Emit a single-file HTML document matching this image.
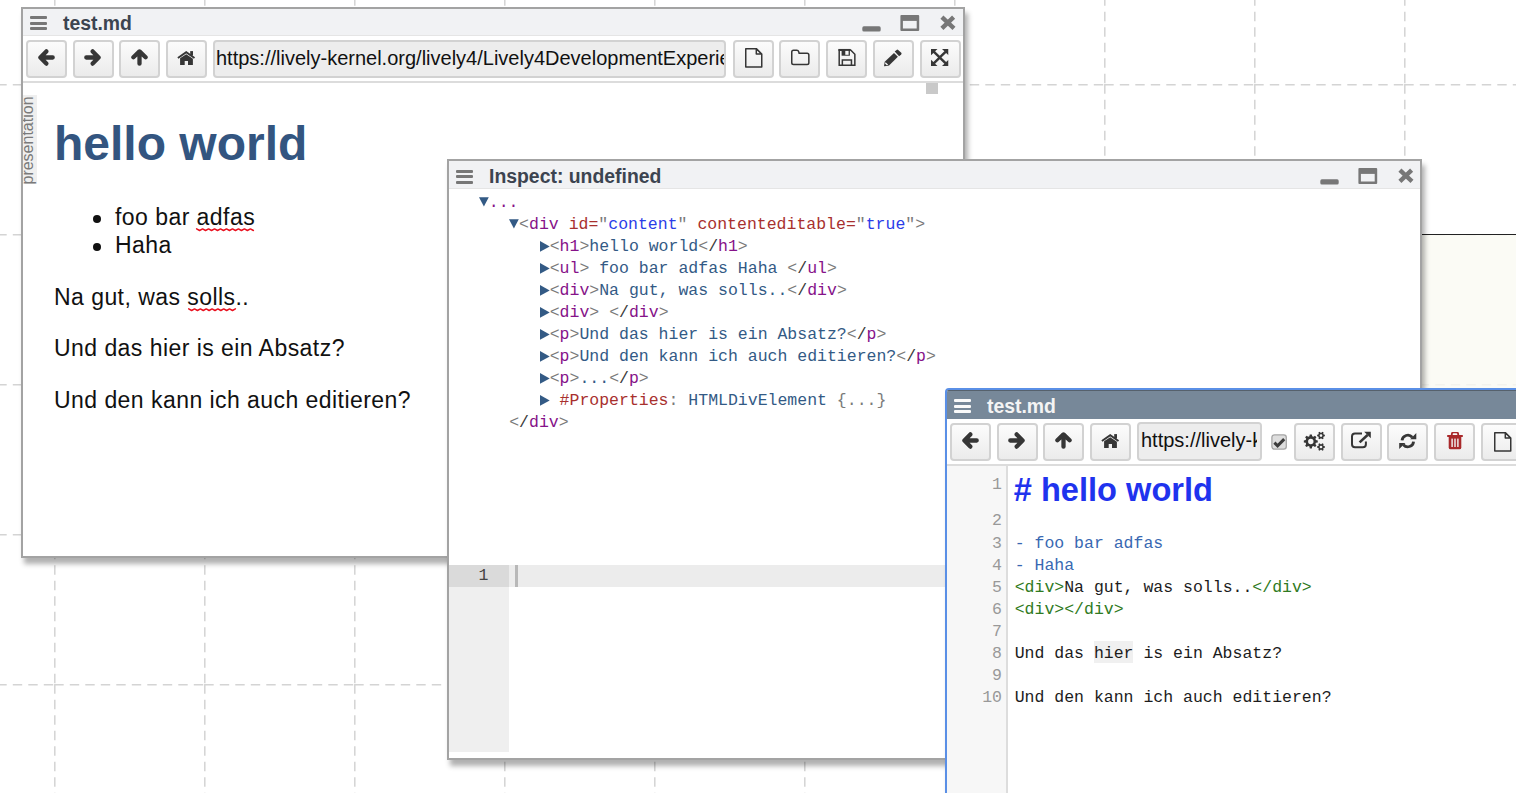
<!DOCTYPE html>
<html><head><meta charset="utf-8">
<style>
html,body{margin:0;padding:0;}
body{width:1516px;height:793px;overflow:hidden;position:relative;background:#fff;font-family:"Liberation Sans",sans-serif;}
.abs{position:absolute;}
.win{position:absolute;box-sizing:border-box;border:2px solid #a3a3a3;background:#fff;box-shadow:3px 6px 5px rgba(0,0,0,0.31);overflow:hidden;}
.tbar{position:absolute;left:0;right:0;top:0;height:26px;background:#f1f2f4;border-bottom:1.7px solid #e5e5e5;}
.ham{position:absolute;width:17px;height:14px;}
.ham i{position:absolute;left:0;width:17px;height:3px;background:#777;border-radius:1px;}
.ttl{position:absolute;font-weight:bold;font-size:19.4px;color:#3c4450;white-space:nowrap;}
.btn{position:absolute;box-sizing:border-box;width:41px;height:38px;border:2px solid #d2d2d2;border-radius:4px;background:linear-gradient(#fcfcfc,#ebebeb);}
.btn svg{position:absolute;}
.url{position:absolute;box-sizing:border-box;height:38px;border:2px solid #d2d2d2;border-radius:4px;background:#ededed;overflow:hidden;font-size:20px;color:#111;white-space:nowrap;}
.url span{position:absolute;top:5px;left:1px;}
.hline{position:absolute;left:0;right:0;height:2px;background:#dcdcdc;}
.mono{font-family:"Liberation Mono",monospace;font-size:16.5px;white-space:pre;}
.tri{position:absolute;}
.g{color:#7a7a7a}.sl{color:#3a3a3a}.tg{color:#861289}.an{color:#a8302e}.av{color:#2b3de8}.tx{color:#335a85}
.cg{color:#2f7a22}.cl{color:#3868b2}.ck{color:#1c1c1c}
.row{position:absolute;font-family:"Liberation Mono",monospace;font-size:16.5px;line-height:22px;white-space:pre;}
.ln{position:absolute;font-family:"Liberation Mono",monospace;font-size:16.5px;line-height:22px;white-space:pre;color:#999;text-align:right;width:40px;}
.w3 .tbar{background:#778899;border-bottom:none;box-shadow:inset 0 1px 0 #56616c;}
.w3 .ham i{background:#fafafa;}
.p23{font-size:23px;line-height:23px;color:#111;white-space:nowrap;letter-spacing:0.45px;}
</style></head>
<body>
<svg width="0" height="0" style="position:absolute">
<defs>
<symbol id="i-left" viewBox="0 0 17 17"><path d="M8.3 2.4L2.4 8.5L8.3 14.6M2.6 8.5H14.7" stroke="#363636" stroke-width="4.3" stroke-linecap="round" stroke-linejoin="round" fill="none"/></symbol>
<symbol id="i-right" viewBox="0 0 17 17"><path d="M8.7 2.4L14.6 8.5L8.7 14.6M14.4 8.5H2.3" stroke="#363636" stroke-width="4.3" stroke-linecap="round" stroke-linejoin="round" fill="none"/></symbol>
<symbol id="i-up" viewBox="0 0 17 17"><path d="M2.4 8.3L8.5 2.4L14.6 8.3M8.5 2.6V14.7" stroke="#363636" stroke-width="4.3" stroke-linecap="round" stroke-linejoin="round" fill="none"/></symbol>
<symbol id="i-home" viewBox="0 0 19 15"><path d="M0.9 8.1L9.2 2.2L17.5 8.1" stroke="#363636" stroke-width="1.9" fill="none"/><rect x="13.2" y="1.1" width="2.8" height="4.5" fill="#363636"/><path d="M3.1 8.3L9.2 4.3L15.9 8.7V14.9H11V11H7.7V14.9H3.1Z" fill="#363636"/></symbol>
<symbol id="i-file" viewBox="0 0 19 21"><path d="M1.75 1.65H12.3L17.75 7.1V19.95H1.75Z M12.3 1.65V7.1H17.75" stroke="#363636" stroke-width="1.5" fill="none" stroke-linejoin="round"/></symbol>
<symbol id="i-folder" viewBox="0 0 20 17"><path d="M1.75 2.9Q1.75 1.15 3.5 1.15H6.8Q8.3 1.15 8.7 2.6L9.1 4.35H17.1Q18.85 4.35 18.85 6.1V13.85Q18.85 15.6 17.1 15.6H3.5Q1.75 15.6 1.75 13.85Z" stroke="#363636" stroke-width="1.5" fill="none" stroke-linejoin="round"/></symbol>
<symbol id="i-save" viewBox="0 0 18 18"><path d="M1.2 1.95H12.6L16.85 6.2V17.15H1.2Z" stroke="#363636" stroke-width="1.5" fill="none"/><rect x="0.45" y="0.95" width="12" height="2" fill="#363636"/><rect x="3.6" y="1.5" width="8.3" height="6.2" fill="#363636"/><rect x="7.3" y="2.9" width="3.3" height="3.9" fill="#f8f8f8"/><path d="M4.35 17V11.95H13.45V17" stroke="#363636" stroke-width="1.5" fill="none"/></symbol>
<symbol id="i-pencil" viewBox="0 0 19 18"><path d="M11 4L14.9 7.7L5.8 16.8L1.7 12.8Z" fill="#363636"/><path d="M1.7 12.8L1 17.3L5.8 16.8Z" fill="#363636"/><path d="M11.7 2.6L13.6 0.9Q14.4 0.2 15.2 0.9L18.3 3.8Q19 4.6 18.2 5.4L16.1 7.2Z" fill="#363636"/><path d="M1.9 14.4L2.8 13.4L5 15.5L4 16.5Z" fill="#f6f6f6"/></symbol>
<symbol id="i-expand" viewBox="0 0 17.5 17.5" preserveAspectRatio="none"><path d="M0 0L6.5 0L4.1 2.4L8.75 7.05L13.4 2.4L11 0L17.5 0L17.5 6.5L15.1 4.1L10.45 8.75L15.1 13.4L17.5 11L17.5 17.5L11 17.5L13.4 15.1L8.75 10.45L4.1 15.1L6.5 17.5L0 17.5L0 11L2.4 13.4L7.05 8.75L2.4 4.1L0 6.5Z" fill="#363636"/></symbol>
<symbol id="i-min" viewBox="0 0 19 6"><rect x="0.3" y="0.3" width="18.4" height="5.2" rx="1.6" fill="#777"/></symbol>
<symbol id="i-max" viewBox="0 0 20 17"><path d="M0.4 2.1Q0.4 1.1 1.4 1.1H18.2Q19.2 1.1 19.2 2.1V16Q19.2 17 18.2 17H1.4Q0.4 17 0.4 16Z" fill="#777"/><rect x="2.9" y="6.9" width="13.8" height="7.6" fill="#f1f2f4"/></symbol>
<symbol id="i-close" viewBox="0 0 16 16"><path d="M1.9 2.1L14 13.3M13.6 2.1L1.9 13.3" stroke="#777" stroke-width="4.4"/></symbol>
<symbol id="i-down" viewBox="0 0 10 10"><path d="M0 0.2H9.8L4.9 9.6Z" fill="#335a85"/></symbol>
<symbol id="i-rt" viewBox="0 0 10 11"><path d="M0 0.1L9.7 5.45L0 10.8Z" fill="#335a85"/></symbol>
<symbol id="i-gears" viewBox="0 0 36 34"><path d="M19.91 15.05 L21.77 15.40 L21.77 17.50 L19.91 17.85 L19.40 19.07 L20.47 20.64 L18.99 22.12 L17.42 21.05 L16.20 21.56 L15.85 23.42 L13.75 23.42 L13.40 21.56 L12.18 21.05 L10.61 22.12 L9.13 20.64 L10.20 19.07 L9.69 17.85 L7.83 17.50 L7.83 15.40 L9.69 15.05 L10.20 13.83 L9.13 12.26 L10.61 10.78 L12.18 11.85 L13.40 11.34 L13.75 9.48 L15.85 9.48 L16.20 11.34 L17.42 11.85 L18.99 10.78 L20.47 12.26 L19.40 13.83ZM12.10 16.45 a2.70 2.70 0 1 0 5.40 0 a2.70 2.70 0 1 0 -5.40 0ZM27.72 9.55 L28.87 9.75 L28.87 11.35 L27.72 11.55 L27.23 12.41 L27.63 13.50 L26.24 14.30 L25.50 13.41 L24.50 13.41 L23.76 14.30 L22.37 13.50 L22.77 12.41 L22.28 11.55 L21.13 11.35 L21.13 9.75 L22.28 9.55 L22.77 8.69 L22.37 7.60 L23.76 6.80 L24.50 7.69 L25.50 7.69 L26.24 6.80 L27.63 7.60 L27.23 8.69ZM23.65 10.55 a1.35 1.35 0 1 0 2.70 0 a1.35 1.35 0 1 0 -2.70 0ZM27.72 21.00 L28.87 21.20 L28.87 22.80 L27.72 23.00 L27.23 23.86 L27.63 24.95 L26.24 25.75 L25.50 24.86 L24.50 24.86 L23.76 25.75 L22.37 24.95 L22.77 23.86 L22.28 23.00 L21.13 22.80 L21.13 21.20 L22.28 21.00 L22.77 20.14 L22.37 19.05 L23.76 18.25 L24.50 19.14 L25.50 19.14 L26.24 18.25 L27.63 19.05 L27.23 20.14ZM23.65 22.00 a1.35 1.35 0 1 0 2.70 0 a1.35 1.35 0 1 0 -2.70 0Z" fill="#363636" fill-rule="evenodd"/></symbol>
<symbol id="i-ext" viewBox="0 0 36 34"><path d="M19 8.4H12Q9 8.4 9 11.4V19.3Q9 22.3 12 22.3H19.9Q22.9 22.3 22.9 19.3V16.5" stroke="#363636" stroke-width="2" fill="none"/><path d="M16.6 17.4L24.6 10" stroke="#363636" stroke-width="2.6"/><path d="M21.2 6.7H27.8V13.2Z" fill="#363636"/></symbol>
<symbol id="i-refresh" viewBox="0 0 36 34"><path d="M13.02 15.49A5.80 5.80 0 0 1 23.24 12.27M24.58 16.51A5.80 5.80 0 0 1 14.36 19.73" stroke="#363636" stroke-width="2.8" fill="none"/><path d="M21.2 14.2H27.3V8.1Z M10.2 17.9H16.4L10.2 24Z" fill="#363636"/></symbol>
<symbol id="i-trash" viewBox="0 0 16 18"><path d="M0.2 3.1H15.8V5H0.2Z" fill="#a9292b"/><path d="M4.8 3.2V2.2Q4.8 0.4 6.6 0.4H9.4Q11.2 0.4 11.2 2.2V3.2" stroke="#a9292b" stroke-width="1.8" fill="none"/><path d="M1.7 4.5H14.3V15.4Q14.3 17.3 12.4 17.3H3.6Q1.7 17.3 1.7 15.4Z" fill="#a9292b"/><rect x="4.4" y="6.6" width="1.4" height="8.4" fill="#f3f3f3"/><rect x="7.3" y="6.6" width="1.4" height="8.4" fill="#f3f3f3"/><rect x="10.2" y="6.6" width="1.4" height="8.4" fill="#f3f3f3"/></symbol>
<symbol id="i-check" viewBox="0 0 16 16"><rect x="0.9" y="0.8" width="14.4" height="14.4" rx="2.6" fill="#dedede" stroke="#a6a6a6" stroke-width="1.3"/><path d="M3.4 8.6L6.6 11.8L13.2 5.1" stroke="#3c3c3c" stroke-width="3" fill="none"/></symbol>
</defs></svg>
<!-- background grid -->
<svg class="abs" style="left:0;top:0" width="1516" height="793">
<g stroke="#d4d4d4" stroke-width="1.5" stroke-dasharray="9.4 6.1" fill="none">
<path d="M54.8 -65.7v150M54.8 84.3v150M54.8 234.3v150M54.8 384.3v150M54.8 534.3v150M54.8 684.3v150M54.8 834.3v150M204.8 -65.7v150M204.8 84.3v150M204.8 234.3v150M204.8 384.3v150M204.8 534.3v150M204.8 684.3v150M204.8 834.3v150M354.8 -65.7v150M354.8 84.3v150M354.8 234.3v150M354.8 384.3v150M354.8 534.3v150M354.8 684.3v150M354.8 834.3v150M504.8 -65.7v150M504.8 84.3v150M504.8 234.3v150M504.8 384.3v150M504.8 534.3v150M504.8 684.3v150M504.8 834.3v150M654.8 -65.7v150M654.8 84.3v150M654.8 234.3v150M654.8 384.3v150M654.8 534.3v150M654.8 684.3v150M654.8 834.3v150M804.8 -65.7v150M804.8 84.3v150M804.8 234.3v150M804.8 384.3v150M804.8 534.3v150M804.8 684.3v150M804.8 834.3v150M954.8 -65.7v150M954.8 84.3v150M954.8 234.3v150M954.8 384.3v150M954.8 534.3v150M954.8 684.3v150M954.8 834.3v150M1104.8 -65.7v150M1104.8 84.3v150M1104.8 234.3v150M1104.8 384.3v150M1104.8 534.3v150M1104.8 684.3v150M1104.8 834.3v150M1254.8 -65.7v150M1254.8 84.3v150M1254.8 234.3v150M1254.8 384.3v150M1254.8 534.3v150M1254.8 684.3v150M1254.8 834.3v150M1404.8 -65.7v150M1404.8 84.3v150M1404.8 234.3v150M1404.8 384.3v150M1404.8 534.3v150M1404.8 684.3v150M1404.8 834.3v150"/>
<path d="M-95.7 84.8h150M-95.7 234.8h150M-95.7 384.8h150M-95.7 534.8h150M-95.7 684.8h150M54.3 84.8h150M54.3 234.8h150M54.3 384.8h150M54.3 534.8h150M54.3 684.8h150M204.3 84.8h150M204.3 234.8h150M204.3 384.8h150M204.3 534.8h150M204.3 684.8h150M354.3 84.8h150M354.3 234.8h150M354.3 384.8h150M354.3 534.8h150M354.3 684.8h150M504.3 84.8h150M504.3 234.8h150M504.3 384.8h150M504.3 534.8h150M504.3 684.8h150M654.3 84.8h150M654.3 234.8h150M654.3 384.8h150M654.3 534.8h150M654.3 684.8h150M804.3 84.8h150M804.3 234.8h150M804.3 384.8h150M804.3 534.8h150M804.3 684.8h150M954.3 84.8h150M954.3 234.8h150M954.3 384.8h150M954.3 534.8h150M954.3 684.8h150M1104.3 84.8h150M1104.3 234.8h150M1104.3 384.8h150M1104.3 534.8h150M1104.3 684.8h150M1254.3 84.8h150M1254.3 234.8h150M1254.3 384.8h150M1254.3 534.8h150M1254.3 684.8h150M1404.3 84.8h150M1404.3 234.8h150M1404.3 384.8h150M1404.3 534.8h150M1404.3 684.8h150M1554.3 84.8h150M1554.3 234.8h150M1554.3 384.8h150M1554.3 534.8h150M1554.3 684.8h150"/>
</g>
</svg>
<!-- right translucent panel -->
<div class="abs" style="left:1400px;top:234px;width:120px;height:160px;border-top:1px solid #222;background:rgba(250,250,243,0.8);"></div>

<!-- WINDOW 1 -->
<div class="win" id="w1" style="left:21px;top:7px;width:944px;height:551px;">
 <div class="tbar" style="height:26px;"></div>
 <div class="ham" style="left:7px;top:7px;"><i style="top:0"></i><i style="top:5.5px"></i><i style="top:11px"></i></div>
 <div class="ttl" style="left:40px;top:5px;line-height:19px;">test.md</div>
 <svg class="abs" style="left:839px;top:17px" width="19" height="6"><use href="#i-min"/></svg>
 <svg class="abs" style="left:877px;top:5px" width="20" height="17"><use href="#i-max"/></svg>
 <svg class="abs" style="left:917px;top:6px" width="16" height="16"><use href="#i-close"/></svg>
 <div class="btn" style="left:3px;top:31px;"><svg style="left:9.5px;top:7.4px" width="17" height="17"><use href="#i-left"/></svg></div>
 <div class="btn" style="left:50px;top:31px;"><svg style="left:8.5px;top:7.4px" width="17" height="17"><use href="#i-right"/></svg></div>
 <div class="btn" style="left:96px;top:31px;"><svg style="left:10px;top:7.4px" width="17" height="17"><use href="#i-up"/></svg></div>
 <div class="btn" style="left:143px;top:31px;"><svg style="left:9px;top:8px" width="19" height="15"><use href="#i-home"/></svg></div>
 <div class="url" style="left:190px;top:31px;width:513px;"><span>https://lively-kernel.org/lively4/Lively4DevelopmentExperience/test.md</span></div>
 <div class="btn" style="left:710px;top:31px;"><svg style="left:8.5px;top:5px" width="19" height="21"><use href="#i-file"/></svg></div>
 <div class="btn" style="left:756px;top:31px;"><svg style="left:8.5px;top:6.5px" width="20" height="17"><use href="#i-folder"/></svg></div>
 <div class="btn" style="left:803px;top:31px;"><svg style="left:9.5px;top:6px" width="18" height="18"><use href="#i-save"/></svg></div>
 <div class="btn" style="left:850px;top:31px;"><svg style="left:8.3px;top:7px" width="19" height="18"><use href="#i-pencil"/></svg></div>
 <div class="btn" style="left:897px;top:31px;"><svg style="left:9.2px;top:6.95px" width="17.5" height="17"><use href="#i-expand"/></svg></div>
 <div class="hline" style="top:72px;"></div>
 <div class="abs" style="left:903px;top:74px;width:12px;height:11px;background:#c9c9c9;"></div>
 <div class="abs" style="left:0px;top:86px;width:14px;height:89px;background:#efefef;overflow:hidden;">
   <div class="abs" style="left:-3px;top:0;width:89px;height:16px;transform-origin:0 0;transform:translate(0,89.5px) rotate(-90deg);font-size:16px;line-height:16px;color:#7a7a7a;white-space:nowrap;">presentation</div>
 </div>
 <div class="abs" style="left:31px;top:110.5px;font-size:48px;line-height:48px;font-weight:bold;color:#335580;white-space:nowrap;">hello world</div>
 <div class="abs" style="left:70px;top:205.5px;width:8px;height:8px;border-radius:50%;background:#111;"></div>
 <div class="abs" style="left:70px;top:233.5px;width:8px;height:8px;border-radius:50%;background:#111;"></div>
 <div class="abs p23" style="left:92px;top:197px;">foo bar adfas</div>
 <div class="abs p23" style="left:92px;top:225px;">Haha</div>
 <div class="abs p23" style="left:31px;top:277px;">Na gut, was solls..</div>
 <div class="abs p23" style="left:31px;top:328px;">Und das hier is ein Absatz?</div>
 <div class="abs p23" style="left:31px;top:380px;">Und den kann ich auch editieren?</div>
 <svg class="abs" style="left:0;top:0;overflow:visible" width="1" height="1"><path d="M173.60 219.90 L176.59 221.50 L179.58 219.90 L182.57 221.50 L185.56 219.90 L188.55 221.50 L191.54 219.90 L194.53 221.50 L197.52 219.90 L200.51 221.50 L203.49 219.90 L206.48 221.50 L209.47 219.90 L212.46 221.50 L215.45 219.90 L218.44 221.50 L221.43 219.90 L224.42 221.50 L227.41 219.90 L230.40 221.50" stroke="#e8101e" stroke-width="1.5" fill="none" stroke-linejoin="round" stroke-linecap="round"/></svg>
 <svg class="abs" style="left:0;top:0;overflow:visible" width="1" height="1"><path d="M165.70 299.90 L168.62 301.50 L171.54 299.90 L174.46 301.50 L177.38 299.90 L180.29 301.50 L183.21 299.90 L186.13 301.50 L189.05 299.90 L191.97 301.50 L194.89 299.90 L197.81 301.50 L200.72 299.90 L203.64 301.50 L206.56 299.90 L209.48 301.50 L212.40 299.90" stroke="#e8101e" stroke-width="1.5" fill="none" stroke-linejoin="round" stroke-linecap="round"/></svg>
</div>

<!-- WINDOW 2 (Inspect) -->
<div class="win" id="w2" style="left:447px;top:159px;width:975px;height:601px;">
 <div class="tbar" style="height:27px;"></div>
 <div class="ham" style="left:7px;top:8.5px;"><i style="top:0"></i><i style="top:5.5px"></i><i style="top:11px"></i></div>
 <div class="ttl" style="left:40px;top:6px;line-height:19px;">Inspect: undefined</div>
 <svg class="abs" style="left:871px;top:18px" width="19" height="6"><use href="#i-min"/></svg>
 <svg class="abs" style="left:908.5px;top:6px" width="20" height="17"><use href="#i-max"/></svg>
 <svg class="abs" style="left:948.5px;top:6.9px" width="16" height="16"><use href="#i-close"/></svg>
 <svg class="tri" style="left:29.9px;top:36.0px" width="10" height="10"><use href="#i-down"/></svg>
 <div class="row" style="left:39.8px;top:30.6px;"><span class="tg">...</span></div>
 <svg class="tri" style="left:60.2px;top:58.3px" width="10" height="10"><use href="#i-down"/></svg>
 <div class="row" style="left:70.1px;top:52.6px;"><span class="g">&lt;</span><span class="tg">div</span> <span class="an">id=</span><span class="g">"</span><span class="av">content</span><span class="g">"</span> <span class="an">contenteditable=</span><span class="g">"</span><span class="av">true</span><span class="g">"&gt;</span></div>
 <svg class="tri" style="left:90.8px;top:80.0px" width="10" height="11"><use href="#i-rt"/></svg>
 <div class="row" style="left:100.7px;top:74.6px;"><span class="g">&lt;</span><span class="tg">h1</span><span class="g">&gt;</span><span class="tx">hello world</span><span class="g">&lt;</span><span class="sl">/</span><span class="tg">h1</span><span class="g">&gt;</span></div>
 <svg class="tri" style="left:90.8px;top:102.0px" width="10" height="11"><use href="#i-rt"/></svg>
 <div class="row" style="left:100.7px;top:96.6px;"><span class="g">&lt;</span><span class="tg">ul</span><span class="g">&gt;</span><span class="tx"> foo bar adfas Haha </span><span class="g">&lt;</span><span class="sl">/</span><span class="tg">ul</span><span class="g">&gt;</span></div>
 <svg class="tri" style="left:90.8px;top:124.0px" width="10" height="11"><use href="#i-rt"/></svg>
 <div class="row" style="left:100.7px;top:118.6px;"><span class="g">&lt;</span><span class="tg">div</span><span class="g">&gt;</span><span class="tx">Na gut, was solls..</span><span class="g">&lt;</span><span class="sl">/</span><span class="tg">div</span><span class="g">&gt;</span></div>
 <svg class="tri" style="left:90.8px;top:146.0px" width="10" height="11"><use href="#i-rt"/></svg>
 <div class="row" style="left:100.7px;top:140.6px;"><span class="g">&lt;</span><span class="tg">div</span><span class="g">&gt;</span><span class="tx"> </span><span class="g">&lt;</span><span class="sl">/</span><span class="tg">div</span><span class="g">&gt;</span></div>
 <svg class="tri" style="left:90.8px;top:168.0px" width="10" height="11"><use href="#i-rt"/></svg>
 <div class="row" style="left:100.7px;top:162.6px;"><span class="g">&lt;</span><span class="tg">p</span><span class="g">&gt;</span><span class="tx">Und das hier is ein Absatz?</span><span class="g">&lt;</span><span class="sl">/</span><span class="tg">p</span><span class="g">&gt;</span></div>
 <svg class="tri" style="left:90.8px;top:190.0px" width="10" height="11"><use href="#i-rt"/></svg>
 <div class="row" style="left:100.7px;top:184.6px;"><span class="g">&lt;</span><span class="tg">p</span><span class="g">&gt;</span><span class="tx">Und den kann ich auch editieren?</span><span class="g">&lt;</span><span class="sl">/</span><span class="tg">p</span><span class="g">&gt;</span></div>
 <svg class="tri" style="left:90.8px;top:212.0px" width="10" height="11"><use href="#i-rt"/></svg>
 <div class="row" style="left:100.7px;top:206.6px;"><span class="g">&lt;</span><span class="tg">p</span><span class="g">&gt;</span><span class="tx">...</span><span class="g">&lt;</span><span class="sl">/</span><span class="tg">p</span><span class="g">&gt;</span></div>
 <svg class="tri" style="left:90.8px;top:234.0px" width="10" height="11"><use href="#i-rt"/></svg>
 <div class="row" style="left:100.7px;top:228.6px;"> <span class="an">#Properties</span><span class="g">:</span> <span class="tx">HTMLDivElement</span> <span class="g">{...}</span></div>
 <div class="row" style="left:60.2px;top:250.6px;"><span class="g">&lt;</span><span class="sl">/</span><span class="tg">div</span><span class="g">&gt;</span></div>
 <div class="abs" style="left:0;top:404px;width:60px;height:186.5px;background:#efefef;"></div>
 <div class="abs" style="left:60px;top:404px;right:0;height:22px;background:#ececec;"></div>
 <div class="abs" style="left:0;top:404px;width:60px;height:22px;background:#dadada;"></div>
 <div class="ln" style="left:0;top:404px;width:39.5px;color:#444;">1</div>
 <div class="abs" style="left:66px;top:404px;width:3px;height:22px;background:#b8b8b8;"></div>
</div>

<!-- WINDOW 3 -->
<div class="win w3" id="w3" style="left:945px;top:388px;width:600px;height:420px;border-color:#5a8fe6;border-radius:4px 0 0 0;">
 <div class="tbar" style="height:28.5px;"></div>
 <div class="ham" style="left:7px;top:9px;"><i style="top:0"></i><i style="top:5.5px"></i><i style="top:11px"></i></div>
 <div class="ttl" style="left:40px;top:7px;line-height:19px;color:#f4f4f4;">test.md</div>
 <div class="btn" style="left:3px;top:32.5px;"><svg style="left:9.5px;top:7.8px" width="17" height="17"><use href="#i-left"/></svg></div>
 <div class="btn" style="left:50px;top:32.5px;"><svg style="left:8.8px;top:7.8px" width="17" height="17"><use href="#i-right"/></svg></div>
 <div class="btn" style="left:96px;top:32.5px;"><svg style="left:10px;top:7.8px" width="17" height="17"><use href="#i-up"/></svg></div>
 <div class="btn" style="left:143px;top:32.5px;"><svg style="left:9px;top:8px" width="19" height="15"><use href="#i-home"/></svg></div>
 <div class="url" style="left:190px;top:32px;width:125px;height:38.5px;"><span style="left:2px;">https://lively-kernel.org/lively4/Lively4DevelopmentExperience/test.md</span><div class="abs" style="right:0;top:0;width:3px;height:34px;background:#ededed;"></div></div>
 <svg class="abs" style="left:324px;top:44px" width="16" height="16"><use href="#i-check"/></svg>
 <div class="btn" style="left:347px;top:32.5px;"><svg style="left:0;top:0" width="36" height="34"><use href="#i-gears"/></svg></div>
 <div class="btn" style="left:394px;top:32.5px;"><svg style="left:0;top:0" width="36" height="34"><use href="#i-ext"/></svg></div>
 <div class="btn" style="left:440px;top:32.5px;"><svg style="left:0;top:0" width="36" height="34"><use href="#i-refresh"/></svg></div>
 <div class="btn" style="left:487px;top:32.5px;"><svg style="left:10.9px;top:7px" width="16" height="18"><use href="#i-trash"/></svg></div>
 <div class="btn" style="left:534px;top:32.5px;"><svg style="left:9.5px;top:6.5px" width="19" height="21"><use href="#i-file"/></svg></div>
 <div class="hline" style="top:74px;"></div>
 <div class="abs" style="left:0;top:76px;width:59px;height:400px;background:#f7f7f7;border-right:2px solid #dddddd;"></div>
 <div class="ln" style="left:15px;top:83.6px;">1</div>
 <div class="ln" style="left:15px;top:120.1px;">2</div>
 <div class="ln" style="left:15px;top:142.6px;">3</div>
 <div class="ln" style="left:15px;top:164.6px;">4</div>
 <div class="ln" style="left:15px;top:186.6px;">5</div>
 <div class="ln" style="left:15px;top:208.6px;">6</div>
 <div class="ln" style="left:15px;top:230.6px;">7</div>
 <div class="ln" style="left:15px;top:252.9px;">8</div>
 <div class="ln" style="left:15px;top:274.6px;">9</div>
 <div class="ln" style="left:15px;top:296.6px;">10</div>

 <div class="abs" style="left:66.8px;top:83.8px;font-size:32.6px;line-height:32.6px;font-weight:bold;color:#1f33ee;white-space:nowrap;">#&nbsp;hello world</div>
 <div class="row" style="left:67.7px;top:142.6px;"><span class="cl">- foo bar adfas</span></div>
 <div class="row" style="left:67.7px;top:164.6px;"><span class="cl">- Haha</span></div>
 <div class="row" style="left:67.7px;top:186.6px;"><span class="cg">&lt;div&gt;</span><span class="ck">Na gut, was solls..</span><span class="cg">&lt;/div&gt;</span></div>
 <div class="row" style="left:67.7px;top:208.6px;"><span class="cg">&lt;div&gt;&lt;/div&gt;</span></div>
 <div class="abs" style="left:146.9px;top:251px;width:39px;height:22px;background:#f0f0f0;"></div>
 <div class="row" style="left:67.7px;top:252.9px;"><span class="ck">Und das hier is ein Absatz?</span></div>
 <div class="row" style="left:67.7px;top:296.6px;"><span class="ck">Und den kann ich auch editieren?</span></div>

</div>

</body></html>
